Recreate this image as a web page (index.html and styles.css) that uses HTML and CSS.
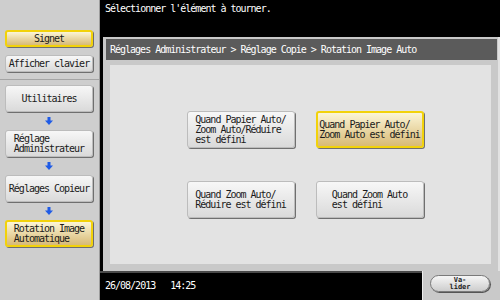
FILE: index.html
```html
<!DOCTYPE html>
<html lang="fr">
<head>
    <meta charset="UTF-8">
    <link rel="stylesheet" href="styles.css">
    <title>Rotation Image Auto</title>
</head>
<body>
    <div class="screen">
        <aside class="sidebar">
            <div class="side-top">
                <div class="btn btn-small btn-active"><span>Signet</span></div>
                <div class="btn btn-small"><span>Afficher clavier</span></div>
            </div>
            <div class="side-nav">
                <div class="btn btn-tall"><span>Utilitaires</span></div>
                <div class="arrow"><svg width="8" height="8" viewBox="0 0 8 8"><rect x="2.5" y="0" width="3" height="4" fill="#1f5be6"/><polygon points="0,3.5 8,3.5 4,8" fill="#1f5be6"/></svg></div>
                <div class="btn btn-tall"><span>Réglage<br>Administrateur</span></div>
                <div class="arrow"><svg width="8" height="8" viewBox="0 0 8 8"><rect x="2.5" y="0" width="3" height="4" fill="#1f5be6"/><polygon points="0,3.5 8,3.5 4,8" fill="#1f5be6"/></svg></div>
                <div class="btn btn-tall"><span>Réglages Copieur</span></div>
                <div class="arrow"><svg width="8" height="8" viewBox="0 0 8 8"><rect x="2.5" y="0" width="3" height="4" fill="#1f5be6"/><polygon points="0,3.5 8,3.5 4,8" fill="#1f5be6"/></svg></div>
                <div class="btn btn-tall btn-active"><span>Rotation Image<br>Automatique</span></div>
            </div>
        </aside>

        <main class="main">
            <div class="prompt">Sélectionner l'élément à tourner.</div>
            <div class="panel">
                <div class="crumbs">Réglages Administrateur &gt; Réglage Copie &gt; Rotation Image Auto</div>
                <div class="content">
                    <div class="options">
                        <div class="btn option"><span>Quand Papier Auto/<br>Zoom Auto/Réduire<br>est défini</span></div>
                        <div class="btn option btn-active"><span>Quand Papier Auto/<br>Zoom Auto est défini</span></div>
                        <div class="btn option"><span>Quand Zoom Auto/<br>Réduire est défini</span></div>
                        <div class="btn option"><span>Quand Zoom Auto<br>est défini</span></div>
                    </div>
                </div>
            </div>
            <div class="footer">
                <div class="status">
                    <span>26/08/2013</span>
                    <span>14:25</span>
                </div>
                <div class="tab">
                    <div class="validate">Va-<br>lider</div>
                </div>
            </div>
        </main>
    </div>
</body>
</html>
```

FILE: styles.css
```css
body {
    margin: 0;
    padding: 0;
    font-family: 'DejaVu Sans Mono', 'Liberation Mono', monospace;
    font-size: 10px;
    letter-spacing: -1px;
    color: #1a1a1a;
}

.screen {
    display: flex;
    width: 500px;
    height: 300px;
    overflow: hidden;
}

/* left column */
.sidebar {
    width: 99px;
    flex-shrink: 0;
    background-color: #cecece;
    border-right: 1px solid #9c9c9c;
    display: flex;
    flex-direction: column;
}

.side-top {
    padding: 30px 0 0 5px;
    height: 80px;
    display: flex;
    flex-direction: column;
    gap: 8px;
    border-bottom: 1px solid #a4a4a4;
    box-sizing: border-box;
}

.side-nav {
    padding: 5px 0 0 5px;
    display: flex;
    flex-direction: column;
}

.btn {
    display: flex;
    flex-shrink: 0;
    align-items: center;
    justify-content: center;
    background: linear-gradient(#f7f7f7, #dadada);
    border: 1px solid #bcbcbc;
    border-radius: 3px;
    box-shadow: 1px 1px 0 #6f6f6f;
    box-sizing: border-box;
    line-height: 10px;
}

.btn span {
    text-align: left;
}

.btn-small {
    width: 88px;
    height: 17px;
}

.btn-tall {
    width: 88px;
    height: 27px;
}

.btn-active {
    background: linear-gradient(#fbf5d6, #d8ba76);
    border: 2px solid #f2d20a;
}

.arrow {
    width: 88px;
    height: 18px;
    display: flex;
    align-items: center;
    justify-content: center;
}

.arrow svg {
    display: block;
}

/* right side */
.main {
    flex: 1;
    background-color: #000;
    display: flex;
    flex-direction: column;
}

.prompt {
    height: 37px;
    padding: 4px 0 0 5px;
    box-sizing: border-box;
    color: #fff;
    line-height: 10px;
}

.panel {
    flex: 1;
    margin-left: 3px;
    background-color: #c9c9c9;
    border-right: 2px solid #e2e2e2;
    padding: 2px 1px 7px 3px;
    display: flex;
    flex-direction: column;
}

.crumbs {
    height: 21px;
    background-color: #5b5b5b;
    color: #fff;
    padding-left: 4px;
    line-height: 21px;
}

.content {
    flex: 1;
    margin: 5px 6px 0 4px;
    background-color: #e3e3e3;
    display: flex;
    align-items: center;
    padding-left: 9px;
}

.options {
    display: grid;
    grid-template-columns: repeat(2, 108px);
    grid-auto-rows: 37px;
    column-gap: 21px;
    row-gap: 33px;
    margin: 0 auto;
}

.option {
    width: 108px;
    height: 37px;
}

.footer {
    height: 29px;
    display: flex;
}

.status {
    flex: 1;
    border-top: 2px solid #4a4a4a;
    color: #fff;
    display: flex;
    gap: 15px;
    padding: 8px 0 0 5px;
    line-height: 10px;
}

.tab {
    width: 78px;
    background-color: #c9c9c9;
    border-left: 1px solid #ececec;
    box-sizing: border-box;
    padding: 4px 0 0 7px;
}

.validate {
    width: 60px;
    height: 17px;
    border-radius: 9px;
    border: 1px solid #7a7a7a;
    background: linear-gradient(#f6f6f6, #cdcdcd);
    box-shadow: 1px 1px 0 #555;
    box-sizing: border-box;
    text-align: center;
    font-size: 7px;
    letter-spacing: 0;
    line-height: 7px;
    padding-top: 1px;
    font-weight: bold;
}
```
